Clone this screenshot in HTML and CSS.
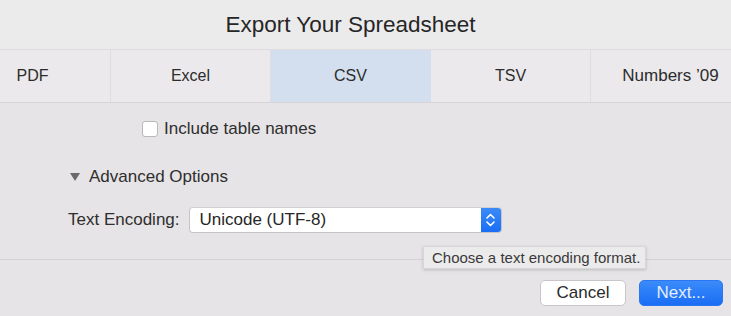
FILE: index.html
```html
<!DOCTYPE html>
<html lang="en">
<head>
    <meta charset="UTF-8">
    <title>Export Your Spreadsheet</title>
    <link rel="stylesheet" href="styles.css">
</head>
<body>
    <div class="sheet">
        <div class="title-bar">
            <h1>Export Your Spreadsheet</h1>
        </div>
        <div class="tabs">
            <div class="tab">PDF</div>
            <div class="tab">Excel</div>
            <div class="tab active">CSV</div>
            <div class="tab">TSV</div>
            <div class="tab">Numbers ’09</div>
        </div>
        <div class="options">
            <label class="check-row">
                <span class="checkbox"></span>
                Include table names
            </label>
            <div class="advanced">
                <span class="triangle"></span>
                Advanced Options
            </div>
            <div class="encoding-row">
                <span class="encoding-label">Text Encoding:</span>
                <div class="select">
                    <span class="select-value">Unicode (UTF-8)</span>
                    <span class="stepper">
                        <svg width="11" height="16" viewBox="0 0 11 16">
                            <path d="M2 6 L5.5 2.5 L9 6" fill="none" stroke="#fff" stroke-width="1.6" stroke-linecap="round" stroke-linejoin="round"/>
                            <path d="M2 10 L5.5 13.5 L9 10" fill="none" stroke="#fff" stroke-width="1.6" stroke-linecap="round" stroke-linejoin="round"/>
                        </svg>
                    </span>
                </div>
            </div>
        </div>
        <div class="footer">
            <button class="btn">Cancel</button>
            <button class="btn primary">Next...</button>
        </div>
        <div class="tooltip">Choose a text encoding format.</div>
    </div>
</body>
</html>
```

FILE: styles.css
```css
html, body {
    margin: 0;
    padding: 0;
    width: 731px;
    height: 316px;
    overflow: hidden;
    background: #e6e4e6;
    font-family: "Liberation Sans", Arial, sans-serif;
    color: #2e2e2e;
}
.sheet {
    position: relative;
    width: 731px;
    height: 316px;
    display: flex;
    flex-direction: column;
}
.title-bar {
    height: 49px;
    background: #ecebec;
    display: flex;
    align-items: center;
    justify-content: center;
    padding-right: 30px;
}
h1 {
    margin: 0;
    font-size: 22.5px;
    font-weight: 400;
    color: #262626;
}
.tabs {
    height: 52px;
    display: flex;
    margin-left: -49px;
    background: #ebe9eb;
    border-top: 1px solid #dedcde;
    border-bottom: 1px solid #d6d4d6;
}
.tab {
    flex: none;
    width: 159px;
    border-right: 1px solid #dfdddf;
    display: flex;
    align-items: center;
    justify-content: center;
    font-size: 16px;
    color: #2c2c2c;
}
.tab:first-child {
    padding-left: 3px;
    box-sizing: border-box;
    width: 160px;
    border-right-width: 0;
    box-shadow: inset -1px 0 #dfdddf;
}
.tab:last-child {
    font-size: 17px;
}
.tab.active {
    background: #d3deee;
    border-right-color: #d3deee;
}
.options {
    height: 156px;
    border-bottom: 1px solid #d3d1d3;
    display: flex;
    flex-direction: column;
    font-size: 17px;
}
.check-row {
    display: flex;
    align-items: center;
    gap: 6px;
    margin: 17px 0 0 142px;
    height: 17px;
}
.checkbox {
    width: 14px;
    height: 14px;
    border: 1px solid #b9b7b9;
    border-radius: 3px;
    background: #fff;
}
.advanced {
    display: flex;
    align-items: center;
    gap: 9px;
    margin: 31px 0 0 70px;
    height: 17px;
}
.triangle {
    width: 0;
    height: 0;
    border-left: 5px solid transparent;
    border-right: 5px solid transparent;
    border-top: 8px solid #6b6a6b;
}
.encoding-row {
    display: flex;
    align-items: center;
    gap: 9px;
    margin: 22px 0 0 68px;
}
.select {
    width: 313px;
    height: 26px;
    display: flex;
    background: #fff;
    border: 1px solid #c6c4c6;
    border-top-color: #d2d0d2;
    border-radius: 4px;
    box-sizing: border-box;
    overflow: hidden;
}
.select-value {
    flex: 1;
    padding-left: 10px;
    display: flex;
    align-items: center;
    color: #262626;
}
.stepper {
    width: 20px;
    display: flex;
    align-items: center;
    justify-content: center;
    background: linear-gradient(#3c8af8, #1a6ef5);
}
.footer {
    flex: 1;
    display: flex;
    justify-content: flex-end;
    align-items: flex-start;
    gap: 13px;
    padding: 20px 8px 0 0;
}
.btn {
    height: 26px;
    padding: 0;
    width: 86px;
    font-family: inherit;
    font-size: 17px;
    color: #2a2a2a;
    background: #fff;
    border: 1px solid #c8c6c8;
    border-radius: 5px;
}
.btn.primary {
    width: 84px;
    color: #e3eefe;
    background: linear-gradient(#3b8bf9, #1a6df5);
    border-color: #2c76f3;
}
.tooltip {
    position: absolute;
    left: 423px;
    top: 246px;
    width: 223px;
    height: 23px;
    box-sizing: border-box;
    background: #ecebec;
    border: 1px solid #d8d6d8;
    box-shadow: 0 1px 3px rgba(0,0,0,0.18);
    font-size: 15px;
    color: #3a3a3a;
    display: flex;
    align-items: center;
    padding-left: 8px;
}
```
